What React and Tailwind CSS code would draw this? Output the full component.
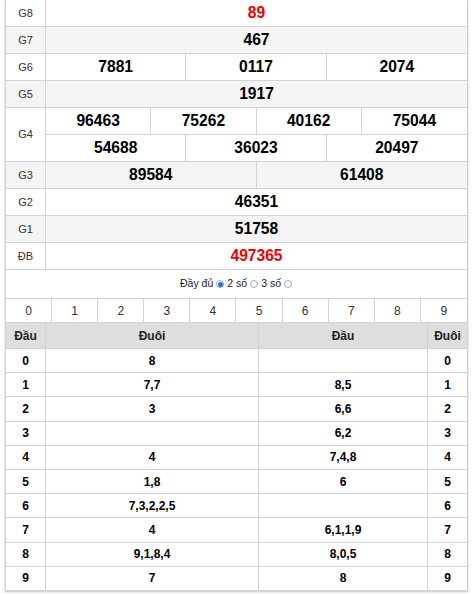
import React from "react";

const prizes = [
  { label: "G8", rows: [["89"]], red: true },
  { label: "G7", rows: [["467"]], alt: true },
  { label: "G6", rows: [["7881", "0117", "2074"]] },
  { label: "G5", rows: [["1917"]], alt: true },
  { label: "G4", rows: [["96463", "75262", "40162", "75044"], ["54688", "36023", "20497"]] },
  { label: "G3", rows: [["89584", "61408"]], alt: true },
  { label: "G2", rows: [["46351"]] },
  { label: "G1", rows: [["51758"]], alt: true },
  { label: "ĐB", rows: [["497365"]], red: true },
];

const loto = [
  ["8", "", "0"],
  ["7,7", "8,5", "1"],
  ["3", "6,6", "2"],
  ["", "6,2", "3"],
  ["4", "7,4,8", "4"],
  ["1,8", "6", "5"],
  ["7,3,2,2,5", "", "6"],
  ["4", "6,1,1,9", "7"],
  ["9,1,8,4", "8,0,5", "8"],
  ["7", "8", "9"],
];

const gridCols = {
  1: "grid-cols-1",
  2: "grid-cols-2",
  3: "grid-cols-3",
  4: "grid-cols-4",
};

// Prize row: label on the left, one or two lines of numbers on the right
function PrizeRow({ prize }) {
  return (
    <div className={`flex border-b border-[#d3d3d3] ${prize.alt ? "bg-[#f4f4f4]" : "bg-white"}`}>
      <div className="w-[40px] shrink-0 border-r border-[#d3d3d3] flex items-center justify-center text-[11px] text-[#333]">
        {prize.label}
      </div>
      <div className="flex-1 flex flex-col">
        {prize.rows.map((nums, i) => (
          <div
            key={i}
            className={`grid ${gridCols[nums.length]} h-[26px] ${i < prize.rows.length - 1 ? "h-[27px] border-b border-[#d3d3d3]" : ""}`}
          >
            {nums.map((n, j) => (
              <div
                key={j}
                className={`flex items-center justify-center text-[15.6px] font-bold ${prize.red ? "text-[#e00]" : "text-black"} ${j < nums.length - 1 ? "border-r border-[#d3d3d3]" : ""}`}
              >
                {n}
              </div>
            ))}
          </div>
        ))}
      </div>
    </div>
  );
}

function Radio({ checked }) {
  return (
    <span className="inline-flex items-center justify-center w-[8px] h-[8px] rounded-full border border-[#aaa] bg-white mx-[1px]">
      {checked && <span className="w-[5px] h-[5px] rounded-full bg-[#1a73e8]" />}
    </span>
  );
}

export default function App() {
  return (
    <div className="bg-white min-h-[595px]" style={{ fontFamily: '"Liberation Sans", Arial, sans-serif' }}>
      <div className="ml-[5px] w-[463px] border-x border-[#d3d3d3] shadow-[0_1px_2px_rgba(0,0,0,0.25)]">
        {prizes.map((p) => (
          <PrizeRow key={p.label} prize={p} />
        ))}

        <div className="h-[29px] border-b border-[#d3d3d3] flex items-center justify-center gap-[2px] text-[10.5px] text-[#222]">
          <span>Đầy đủ</span>
          <Radio checked />
          <span>2 số</span>
          <Radio />
          <span>3 số</span>
          <Radio />
        </div>

        <div className="grid grid-cols-10 h-[24px] border-b border-[#d3d3d3]">
          {Array.from({ length: 10 }, (_, i) => (
            <div
              key={i}
              className={`flex items-center justify-center text-[12px] text-[#333] ${i < 9 ? "border-r border-[#d3d3d3]" : ""}`}
            >
              {i}
            </div>
          ))}
        </div>

        <div className="grid grid-cols-[40px_213px_169px_1fr] h-[26px] bg-[#dedede] border-b border-[#d3d3d3] text-[12px] font-bold text-[#222]">
          <div className="flex items-center justify-center border-r border-[#d3d3d3]">Đầu</div>
          <div className="flex items-center justify-center border-r border-[#d3d3d3]">Đuôi</div>
          <div className="flex items-center justify-center border-r border-[#d3d3d3]">Đầu</div>
          <div className="flex items-center justify-center">Đuôi</div>
        </div>

        {loto.map(([tail, head, d], i) => (
          <div
            key={i}
            className="grid grid-cols-[40px_213px_169px_1fr] h-[24.2px] border-b border-[#d3d3d3] text-[12px] font-bold text-black"
          >
            <div className="flex items-center justify-center border-r border-[#d3d3d3]">{i}</div>
            <div className="flex items-center justify-center border-r border-[#d3d3d3]">{tail}</div>
            <div className="flex items-center justify-center border-r border-[#d3d3d3]">{head}</div>
            <div className="flex items-center justify-center">{d}</div>
          </div>
        ))}
      </div>
    </div>
  );
}
